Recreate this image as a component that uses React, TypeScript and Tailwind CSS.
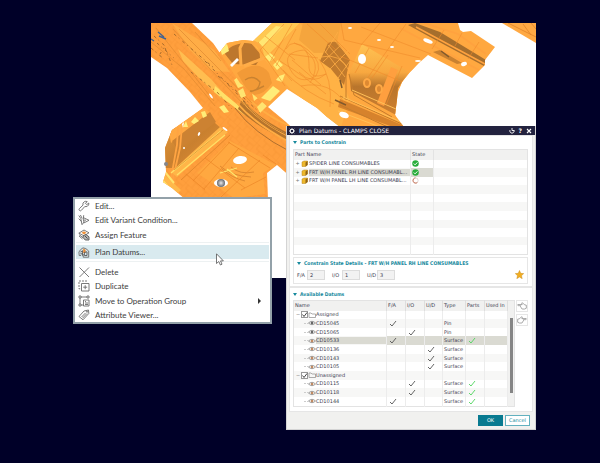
import type { ReactNode } from "react";

const FONT = "font-['Lato','Open_Sans',sans-serif]";

/* ---------- Viewport model ---------- */

function BodyModel() {
  const rail = "M151 23H192L213 43 222 56 240 83 268 107 286 122 300 136V185L277 165 267 173 268 200H186L172 188 163 182 166 172 165 148 172 130 203 108 190 92 167 68 151 57Z";
  const hub = "M213 58 220 52 227 43 243 40 253 41 272 23H458L460 30 463 32 471 31 495 47 485 60V65L472 78 428 55 419 63 410 72 402 82 398 92 395 115 404 127H340L327 117 317 108 287 89 268 107 250 112 228 90Z";
  return (
    <svg viewBox="151 23 385 255" preserveAspectRatio="xMinYMin slice" className="block h-full w-full" role="img" aria-label="Vehicle body panel model">
      <defs>
        <linearGradient id="floor" x1="0" y1="0" x2="1" y2="1">
          <stop offset="0" stopColor="#e59b3c" />
          <stop offset="0.5" stopColor="#c9802f" />
          <stop offset="1" stopColor="#e89438" />
        </linearGradient>
        <linearGradient id="arch" x1="0" y1="0" x2="0" y2="1">
          <stop offset="0" stopColor="#ffc252" />
          <stop offset="0.4" stopColor="#f8a840" />
          <stop offset="0.6" stopColor="#b8752c" />
          <stop offset="1" stopColor="#cf8030" />
        </linearGradient>
        <radialGradient id="ball">
          <stop offset="0" stopColor="#e8e8e8" />
          <stop offset="1" stopColor="#66686c" />
        </radialGradient>
        <pattern id="seams" width="13" height="11" patternUnits="userSpaceOnUse" patternTransform="rotate(42)">
          <path d="M0 0H13M0 0V11M4 0V5H13M8 5V11" fill="none" stroke="#e88528" strokeWidth="0.5" />
        </pattern>
        <clipPath id="hubClip"><path d={hub} /></clipPath>
        <clipPath id="railClip"><path d={rail} /></clipPath>
      </defs>

      <path d={hub} fill="#ffa840" />
      <g clipPath="url(#hubClip)">
        <path d="M272 23 252 42 265 58 300 23Z" fill="#ffc852" />
        <path d="M276 26 258 43 262 47 283 27Z" fill="#ffe773" />
        <path d="M300 23 265 60 290 89 340 130 350 100 332 60Z" fill="#ffb245" />
        <path d="M303 23 299 40 314 53 345 52 361 23Z" fill="#f5a53d" />
        <path d="M328 43Q345 37 350 60L344 85 331 69 320 61Z" fill="#c07a2d" />
        <path d="M341 23 337 42 350 60 355 105 396 118 398 90 418 63 425 54 363 23Z" fill="#ffa840" />
        <path d="M362 44 349 73 351 91 396 115 398 88 409 72Z" fill="url(#arch)" />
        <path d="M391 67 398 70 384 106 377 103Z" fill="#ff9f3f" />
        <path d="M415 23 440 32 486 60 484 66 430 37 408 25Z" fill="#a66e2c" />
        <path d="M424 23 458 34 486 54M416 27 485 64M400 28 479 70" stroke="#ffa23f" strokeWidth="1.6" fill="none" />
        <path d="M440 50 462 63 457 64 433 52Z" fill="#c98130" />
        <path d="M340 99 407 127H393L338 107Z" fill="#d6822c" />
        <path d="M340 96 404 125M340 105 390 128M349 74 354 95 392 117M346 69 346 100" stroke="#c47c2c" fill="none" strokeWidth="1" />
        <path d="M343 97 406 124M338 111 380 127M352 90 396 109" stroke="#ffc058" fill="none" strokeWidth="1" />
        <path d="M225 54Q228 44 250 42L262 56 256 65 233 64Z" fill="#bd772d" />
        <path d="M216 58Q224 42 243 41T262 58" stroke="#ffab42" strokeWidth="4" fill="none" />
        <path d="M241 66 240 48 244 40M244 66 264 58" stroke="#ffad48" strokeWidth="3" fill="none" />
        <path d="M237 73Q258 58 269 73L272 83Q264 96 250 95Z" fill="#f29a37" />
        <path d="M245 80Q253 74 260 82 259 91 250 91M247 93 258 89 264 86" fill="none" stroke="#c98230" strokeWidth="1.4" />
        <path d="M220 48 227 44 229 51 222 55ZM265 57 270 53 275 57 270 62ZM273 65 278 60 283 65 277 70ZM279 76 285 74 282 82 276 80ZM261 98 273 86 280 91 270 101Z" fill="#ffed78" />
        <g fill="none" stroke="#f08b2c" strokeWidth="0.6">
          <path d="M284 24 260 50 285 86M292 24 270 62M296 29 276 66M258 42 292 81M265 36 295 60M307 24 336 50M320 24 350 54M341 23 344 40 420 58M380 23 361 45M406 24 364 83M340 56 405 83M369 48 355 73M388 55 372 78M402 66 386 105M361 27 431 54M444 30 432 49M462 33 455 46M479 42 468 59" />
          <path d="M286 49Q292 37 308 50T316 76Q299 86 290 69T304 50Q323 62 310 83M294 43Q310 47 309 64T326 74Q312 86 299 72M280 61Q301 74 326 94M283 70Q304 93 334 104M319 59Q333 80 330 107M301 86Q331 80 346 105M292 60 321 85M289 54 318 58" />
          <path d="M324 50 345 77M328 45 347 67M335 41 350 58M343 43 323 62M349 50 328 71M350 61 336 81M338 32 325 53M321 57Q340 52 350 72" stroke="#ffad45" strokeWidth="0.8" />
        </g>
        <path d="M340 80 342 88M335 100 346 105M441 51 449 57" stroke="#80592c" strokeWidth="1.5" />
      </g>
      <g fill="#fff">
        <ellipse cx="362" cy="59" rx="4" ry="5" />
        <ellipse cx="428" cy="41" rx="5" ry="2" transform="rotate(22 428 41)" />
        <ellipse cx="379" cy="40" rx="2" ry="1" /><ellipse cx="392" cy="47" rx="2" ry="1" />
        <ellipse cx="350" cy="28" rx="2" ry="1" /><ellipse cx="464" cy="64" rx="3" ry="2" transform="rotate(-20 464 64)" />
        <ellipse cx="344" cy="115" rx="5" ry="3" transform="rotate(20 344 115)" />
        <ellipse cx="418" cy="61" rx="3" ry="1" /><path d="M230 65 237 58 239 60 232 67Z" />
      </g>
      <g fill="#dd8932" stroke="#ffa945" strokeWidth="2">
        <ellipse cx="367" cy="83" rx="3" ry="4" /><ellipse cx="379" cy="89" rx="3" ry="4" />
      </g>

      <path d={rail} fill="#ff9f3d" />
      <g clipPath="url(#railClip)">
        <path d={rail} fill="url(#seams)" opacity="0.5" />
        <path d="M172 23 204 43 214 50 230 72 212 71 190 50Z" fill="#ffad46" />
        <path d="M178 49 190 60 211 79 224 94 221 98 199 78 183 61Z" fill="#ffbd50" />
        <path d="M215 86 227 96 239 106 246 116 229 103 214 92Z" fill="#ffe068" />
        <path d="M165 132 206 115 223 130 176 168 165 168Z" fill="url(#floor)" />
        <path d="M169 132 203 108 210 112 171 143Z" fill="#ffa942" />
        <path d="M172 141 210 112 216 122 178 150Z" fill="#cc8232" />
        <path d="M183 127 186 121 188 127ZM191 122 195 117 199 121 194 124ZM201 112 205 111 207 116 203 118ZM219 107 224 105 229 112 224 113Z" fill="#ffed78" />
        <path d="M178 127 177 145 170 184M182 126 180 148 171 187" stroke="#ffa442" strokeWidth="1.8" fill="none" />
        <path d="M220 127 228 132 177 177 171 172Z" fill="#ffb548" />
        <path d="M221 131 171 173M225 135 177 175" stroke="#ffdf66" strokeWidth="1.3" />
        <path d="M223 130 174 170M230 135 181 180" stroke="#d98028" strokeWidth="0.7" />
        <path d="M163 173 181 190 174 197 162 184Z" fill="#ffb84a" />
        <path d="M165 172 174 183M163 181 171 190" stroke="#ffe26c" strokeWidth="2" />
        <path d="M230 141 276 165 263 173 265 194 234 198 197 173Z" fill="#ffa840" />
        <path d="M220 166Q231 176 251 177M222 169Q232 178 245 181M231 167Q240 175 254 172" stroke="#d4822d" strokeWidth="0.8" fill="none" />
        <path d="M227 169 237 177M220 173 237 168" stroke="#ffe36a" strokeWidth="1.3" />
        <path d="M242 99Q256 117 290 134V142Q257 127 238 109Z" fill="#b5742d" />
        <path d="M240 98Q257 121 292 138M237 103Q255 124 291 143M251 101Q268 117 290 126" stroke="#ffac43" strokeWidth="1.8" fill="none" />
        <path d="M235 108Q253 133 291 152M243 101Q257 121 291 137" stroke="#9b632b" strokeWidth="0.8" fill="none" />
        <path d="M173 29 211 70 244 105M179 29 216 66 252 103M195 32 221 61M156 28 214 101M151 42 184 69 215 106" stroke="#e08a30" strokeWidth="0.7" fill="none" />
        <g fill="none" stroke="#a56a2c" strokeWidth="1" strokeDasharray="3 3 1 4">
          <path d="M154 36 165 46 160 54M157 43 174 58M165 48 172 65M174 34 214 68M205 61 250 107M218 76 232 87 260 113" />
          <path d="M191 72 217 92 232 109M151 48 164 59" />
        </g>
        <path d="M158 32 164 37M159 36 166 39M151 39 154 41" stroke="#456390" strokeWidth="1.4" />
        <path d="M234 80 239 76 244 86 238 88ZM238 91 243 88 246 96 241 98ZM252 93 258 98 254 101ZM257 107 263 101 267 106 260 113Z" fill="#ffe470" />
        <path d="M193 181 230 142M204 189 239 148M221 197 260 160M186 174 205 190M205 158 245 188M228 142 270 168M263 155 276 164M241 190 266 177" stroke="#ed8728" strokeWidth="0.7" />
      </g>
      <g fill="#fff">
        <ellipse cx="240" cy="160" rx="7" ry="4" transform="rotate(-8 240 160)" />
        <ellipse cx="221" cy="183" rx="7" ry="4" /><ellipse cx="199" cy="134" rx="1" ry="2" transform="rotate(25 199 134)" />
        <ellipse cx="211" cy="96" rx="1" ry="3" transform="rotate(-35 211 96)" /><ellipse cx="225" cy="129" rx="3" ry="1" transform="rotate(35 225 129)" />
        <circle cx="184" cy="148" r="1" /><path d="M182 124 184 122 183 128Z" />
      </g>
      <circle cx="221" cy="183" r="4" fill="url(#ball)" />
      <circle cx="166" cy="164" r="2" fill="#85858a" />
      <path d="M502 23H536V43Z" fill="#ffa943" />
      <path d="M508 23 536 37M531 23 536 29M523 24 531 35" stroke="#e1842b" strokeWidth="0.8" />
    </svg>
  );
}

/* ---------- Context menu ---------- */

function MenuIcon({ children }: { children: ReactNode }) {
  return (
    <svg viewBox="0 0 12 12" className="h-3 w-3 shrink-0" fill="none" stroke="#6b6b6b" strokeWidth="0.9" aria-hidden="true">
      {children}
    </svg>
  );
}

const wrench = <path d="M1.4 8.6 5 5.1Q4.3 2.9 6.3 1.7 7.7 0.9 9.2 1.6L7.4 3.4 8.8 4.6 10.8 3Q11.2 5.2 9.3 6.3 8.1 6.9 6.8 6.5L3.4 10.3Q2.4 11.4 1.4 10.4 0.6 9.5 1.4 8.6Z" />;
const variant = <><path d="M0.8 1.5 2.8 4.5 4 10.8M2.4 1 4.2 4.5M0.7 4.6 3.4 7.5M4.3 10.5 6.2 7.7" /><path d="M5.7 1.2 5.3 5.3 6.2 8.8 11 6.3 5.3 3.6M5.5 6 8 6.2" /></>;
const feature = <><path d="M0.8 4.2 6 1 11 3.8 6 6.8ZM1 5.6 5 8.6M1 7 4.5 10" /><path d="M3.5 3.8 6 2.2 8.5 3.8 6 5.6Z" fill="#ee9138" stroke="none" /><path d="M5.5 6.5 8 5.5 11 7.8V11H7.2L5 8.5Z" fill="#b5b5b5" stroke="#555" /><path d="M7 7 9.5 9.5" stroke="#444" /></>;
const datums = <><path d="M3 9.5H1.2Q0 5.5 2.6 3.6 4.8 0.6 7.8 2.6L10.7 5V11.2H5.2V8" /><path d="M5.2 2.5 7.6 3.8V7H5.2Z" fill="#e78a36" stroke="none" /><path d="M6.4 6.4 9 5.8V9.5H6.4ZM2.4 6 4.6 5.2M2.4 7.8H5M4.4 4.4V9.8" stroke="#555" /></>;
const cross = <path d="M1.5 1.5 11 11M11 1.5 1.5 11" />;
const duplicate = <><path d="M3.5 3.5H11V11H3.5ZM7.2 5.2V9.2M5.2 7.2H9.2" /><path d="M9 1H1V8.8H2.6" strokeDasharray="2 1" /></>;
const move = <><path d="M1 1H3V3H1ZM9 1H11V3H9ZM1 9H3V11H1ZM3 2H9M2 3V9M3 10H5" /><path d="M5.5 5H11V11H5.5ZM7 8H10M7 9.5H10M7 6.5H8" /></>;
const tag = <><path d="M1 7.5 6 2 10.5 1 10.8 4.5 5 10.8Z" /><path d="M3.5 8 7.5 4M4.5 9.2 9 4.5" /><circle cx="9" cy="2.7" r="0.6" /></>;

function MenuItem({ icon, label, active, submenu }: { icon: ReactNode; label: string; active?: boolean; submenu?: boolean }) {
  return (
    <button type="button" role="menuitem" className={`flex w-full items-center gap-[5px] pr-2 pl-[2px] text-left ${active ? "bg-[#d9eaef]" : ""}`}>
      <MenuIcon>{icon}</MenuIcon>
      <span className="flex-1">{label}</span>
      {submenu && <span className="h-0 w-0 border-y-[3px] border-l-[3px] border-y-transparent border-l-[#333]" />}
    </button>
  );
}

function ContextMenu() {
  return (
    <div role="menu" className="absolute top-[197px] left-[73px] w-[199px] border-2 border-[#93a1a9] bg-white px-px text-[8px] leading-[12px] text-[#3c3c3c]">
      <div className="grid h-[43px] auto-rows-fr">
        <MenuItem icon={wrench} label="Edit..." />
        <MenuItem icon={variant} label="Edit Variant Condition..." />
        <MenuItem icon={feature} label="Assign Feature" />
      </div>
      <div className="border-y border-[#edf1f2] py-[2px]">
        <div className="grid h-[14px]">
          <MenuItem icon={datums} label="Plan Datums..." active />
        </div>
      </div>
      <div className="grid h-[60px] auto-rows-fr pt-[3px]">
        <MenuItem icon={cross} label="Delete" />
        <MenuItem icon={duplicate} label="Duplicate" />
        <MenuItem icon={move} label="Move to Operation Group" submenu />
        <MenuItem icon={tag} label="Attribute Viewer..." />
      </div>
      <svg viewBox="0 0 8 13" className="absolute top-[54px] left-[141px] h-[13px] w-2" aria-hidden="true">
        <path d="M0.5 0.8V10.5L2.8 8.5 4.4 12 6 11.2 4.5 7.9H7.4Z" fill="#fff" stroke="#555" strokeWidth="0.8" />
      </svg>
    </div>
  );
}

/* ---------- Dialog ---------- */

function SectionTitle({ children }: { children: ReactNode }) {
  return (
    <h2 className="flex items-center gap-[3px] font-['DejaVu_Sans_Condensed','Open_Sans',sans-serif] leading-[8px] font-bold text-[#188a9e]">
      <span className="h-0 w-0 border-x-2 border-t-[3px] border-x-transparent border-t-[#188a9e]" />
      {children}
    </h2>
  );
}

function Check({ color }: { color: string }) {
  return (
    <svg viewBox="0 0 8 7" className="mx-auto block h-[7px] w-2" aria-label="Yes">
      <path d="M1 4 3 6 7 1" fill="none" stroke={color} strokeWidth="0.9" />
    </svg>
  );
}

function StateIcon({ ok }: { ok: boolean }) {
  return (
    <svg viewBox="0 0 8 8" className="block h-[7px] w-[7px]" aria-label={ok ? "Constrained" : "Incomplete"}>
      {ok ? (
        <><circle cx="4" cy="4" r="3.7" fill="#29ad3b" /><path d="M2 4 3.5 5.5 6.2 2.7" fill="none" stroke="#fff" strokeWidth="1.1" /></>
      ) : (
        <><circle cx="4" cy="4" r="3" fill="none" stroke="#ddd0cc" strokeWidth="1" /><path d="M4 1A3 3 0 1 0 6 6.4" fill="none" stroke="#c7694a" strokeWidth="1" /></>
      )}
    </svg>
  );
}

const parts = [
  { name: "SPIDER LINE CONSUMABLES", ok: true },
  { name: "FRT W/H PANEL RH LINE CONSUMABL...", ok: true, selected: true },
  { name: "FRT W/H PANEL LH LINE CONSUMABL...", ok: false },
];
const emptyRows = [3, 4, 5, 6, 7, 8, 9, 10];

function PartsTable() {
  return (
    <table className="h-[106px] w-full table-fixed border-collapse border border-[#e3e3e3] text-left">
      <colgroup><col className="w-[117px]" /><col className="w-[23px]" /><col /></colgroup>
      <thead>
        <tr className="bg-[#f1f1f0]">
          <th className="h-[10px] border-r border-[#e3e3e3] pl-px font-normal">Part Name</th>
          <th className="border-r border-[#e3e3e3] pl-px font-normal">State</th>
          <th />
        </tr>
      </thead>
      <tbody>
        {parts.map((p) => (
          <tr key={p.name} className="even:bg-[#f7f7f6]">
            <td className="border-r border-[#ececec]">
              <div className="flex items-center whitespace-nowrap">
                <span className="w-[7px] shrink-0 text-center text-[#777]">+</span>
                <svg viewBox="0 0 7 7" className="mr-px h-[7px] w-[7px] shrink-0" aria-hidden="true">
                  <path d="M1 2 3 1H6.5V5L4.5 6.5H1Z" fill="#eeb82b" stroke="#b7821b" strokeWidth="0.5" />
                  <path d="M4.5 2.5 6.5 1V5L4.5 6.5Z" fill="#8d6218" />
                </svg>
                <span className={`flex-1 ${p.selected ? "bg-[#dadad2]" : ""}`}>{p.name}</span>
              </div>
            </td>
            <td className={`border-r border-[#ececec] pl-px ${p.selected ? "bg-[#dadad2]" : ""}`}><StateIcon ok={p.ok} /></td>
            <td />
          </tr>
        ))}
        {emptyRows.map((r) => (
          <tr key={r} className={r % 2 ? "bg-[#f7f7f6]" : ""}>
            <td className="border-r border-[#ececec]">&nbsp;</td>
            <td className="border-r border-[#ececec]">&nbsp;</td>
            <td>&nbsp;</td>
          </tr>
        ))}
      </tbody>
    </table>
  );
}

type Datum = { name: string; group?: boolean; fa?: boolean; io?: boolean; ud?: boolean; type?: string; parts?: boolean; selected?: boolean; warm?: boolean };
const datumRows: Datum[] = [
  { name: "Assigned", group: true },
  { name: "CD15045", fa: true, type: "Pin" },
  { name: "CD15065", io: true, type: "Pin" },
  { name: "CD10533", fa: true, type: "Surface", parts: true, selected: true, warm: true },
  { name: "CD10136", ud: true, type: "Surface", warm: true },
  { name: "CD10143", ud: true, type: "Surface", warm: true },
  { name: "CD10105", ud: true, type: "Surface", warm: true },
  { name: "Unassigned", group: true },
  { name: "CD10115", io: true, type: "Surface", parts: true, warm: true },
  { name: "CD10118", io: true, type: "Surface", parts: true, warm: true },
  { name: "CD10144", fa: true, type: "Surface", parts: true, warm: true },
];

function DatumName({ d }: { d: Datum }) {
  if (d.group) {
    return (
      <label className="flex items-center pl-[2px]">
        <span className="w-[5px] text-[#777]">−</span>
        <span className="grid h-[7px] w-[7px] shrink-0">
          <input type="checkbox" defaultChecked className="col-start-1 row-start-1 h-[7px] w-[7px] appearance-none border border-[#999] bg-white" />
          <svg viewBox="0 0 7 7" className="pointer-events-none col-start-1 row-start-1 h-[7px] w-[7px]" aria-hidden="true">
            <path d="M1.5 3.5 3 5.5 6 1.5" fill="none" stroke="#333" strokeWidth="0.9" />
          </svg>
        </span>
        <svg viewBox="0 0 8 6" className="h-[6px] w-2 shrink-0" aria-hidden="true">
          <path d="M1 5.5V1H3L4 2H7.5V5.5Z" fill="none" stroke="#8a8a8a" strokeWidth="0.7" />
        </svg>
        <span>{d.name}</span>
      </label>
    );
  }
  return (
    <div className="flex items-center pl-[10px]">
      <span className="w-1 border-t border-dotted border-[#ccc]" />
      <svg viewBox="0 0 8 6" className="h-[6px] w-2 shrink-0" aria-hidden="true">
        <path d="M0.5 3Q4-0.4 7.5 3 4 6.4 0.5 3Z" fill="none" stroke="#858585" strokeWidth="0.8" />
        <circle cx="4" cy="3" r="1.3" fill={d.warm ? "#c18a63" : "#666"} />
      </svg>
      <span className={`flex-1 ${d.selected ? "bg-[#dadad2]" : ""}`}>{d.name}</span>
    </div>
  );
}

function DatumsTable() {
  const cell = "border-r border-[#ececec]";
  const head = "border-r border-[#dedede] pl-px font-normal";
  return (
    <table className="h-[107px] w-full table-fixed border-collapse border border-[#e3e3e3] text-left whitespace-nowrap">
      <colgroup>
        <col className="w-[93px]" /><col className="w-[19px]" /><col className="w-[19px]" /><col className="w-[18px]" />
        <col className="w-[23px]" /><col className="w-[19px]" /><col className="w-[23px]" /><col />
      </colgroup>
      <thead>
        <tr className="bg-[#f1f1f0]">
          <th className={`h-[10px] ${head}`}>Name</th><th className={head}>F/A</th><th className={head}>I/O</th><th className={head}>U/D</th>
          <th className={head}>Type</th><th className={head}>Parts</th><th className={head}>Used In</th><th />
        </tr>
      </thead>
      <tbody>
        {datumRows.map((d, i) => (
          <tr key={d.name} className={i % 2 ? "bg-[#f7f7f6]" : ""}>
            <td className={cell}><DatumName d={d} /></td>
            {[d.fa, d.io, d.ud].map((on, c) => (
              <td key={c} className={`${cell} pr-[6px] ${d.selected ? "bg-[#dadad2]" : ""}`}>{on && <Check color="#555" />}</td>
            ))}
            <td className={`${cell} pl-px ${d.selected ? "bg-[#dadad2]" : ""}`}>{d.type}</td>
            <td className={`${cell} pr-[6px] ${d.selected ? "bg-[#dadad2]" : ""}`}>{d.parts && <Check color="#4ed45c" />}</td>
            <td className={`${cell} ${d.selected ? "bg-[#dadad2]" : ""}`} />
            {i === 0 && (
              <td rowSpan={11} className="bg-[#f1f1f0] align-top">
                <div className="mx-auto mt-[7px] h-[75px] w-[3px] bg-[#858585]" />
              </td>
            )}
          </tr>
        ))}
      </tbody>
    </table>
  );
}

function HandButton({ label, flip }: { label: string; flip?: boolean }) {
  return (
    <button type="button" aria-label={label} className="grid h-3 w-3 place-items-center border border-[#e6e6e6] bg-white">
      <svg viewBox="0 0 12 10" className={`h-2 w-[10px] ${flip ? "-scale-x-100" : ""}`} aria-hidden="true">
        <path d="M0.8 3.2Q0.4 4.6 1.6 4.6H4.4Q3.6 6 4.8 6.4 4.4 7.6 5.6 7.8 5.6 8.8 6.8 8.8H9.2L11.4 7.8V4L9 3.4 6.6 0.9Q5.4 0.8 5.8 2.2L6.2 3.2Z" fill="none" stroke="#777" strokeWidth="0.8" />
      </svg>
    </button>
  );
}

function CountField({ id, label, value }: { id: string; label: string; value: string }) {
  return (
    <div className="flex w-[35px] items-center justify-between pr-[7px]">
      <label htmlFor={id}>{label}</label>
      <input id={id} readOnly defaultValue={value} className="h-[10px] w-[18px] border border-[#dcdcdc] bg-[#f2f2f2] pl-[2px]" />
    </div>
  );
}

function PlanDatumsDialog() {
  return (
    <section role="dialog" aria-labelledby="dialog-title" className="absolute top-[126px] right-[64px] w-[250px] border-x border-b border-[#d4d4d4] bg-[#f1f1ef] font-['DejaVu_Sans','Open_Sans',sans-serif] text-[5px] leading-[7px] text-[#3c3c50]">
      <header className="flex h-[9px] items-center gap-[4px] bg-[#23233f] pr-[3px] pl-[2px] text-white">
        <svg viewBox="0 0 8 8" className="h-[6px] w-[6px]" aria-hidden="true">
          <circle cx="4" cy="4" r="2.4" fill="none" stroke="#fff" strokeWidth="1.4" />
          <path d="M4 0V1.5M4 6.5V8M0 4H1.5M6.5 4H8M1 1 2 2M6 6 7 7M7 1 6 2M2 6 1 7" stroke="#fff" />
        </svg>
        <h1 id="dialog-title" className="flex-1 text-[6px] leading-[9px] font-normal">Plan Datums - CLAMPS CLOSE</h1>
        <button type="button" aria-label="Reset"><svg viewBox="0 0 6 6" className="h-[6px] w-[6px]"><path d="M1 2A2.2 2.2 0 1 0 5 2M3 0V2.5H5" fill="none" stroke="#fff" strokeWidth="0.9" /></svg></button>
        <button type="button" aria-label="Help" className="text-[6px] font-bold">?</button>
        <button type="button" aria-label="Close"><svg viewBox="0 0 6 6" className="h-[6px] w-[6px]"><path d="M1 1 5 5M5 1 1 5" stroke="#fff" strokeWidth="1.1" /></svg></button>
      </header>
      <div className="mx-[2px] border border-[#e6e6e6] bg-white px-[3px] pt-[2px] pb-[2px]">
        <SectionTitle>Parts to Constrain</SectionTitle>
        <div className="mt-[3px] mr-px"><PartsTable /></div>
        <div className="mt-[2px] mr-px border border-[#e6e6e6] px-[3px] pt-px pb-[3px]">
          <SectionTitle>Constrain State Details - FRT W/H PANEL RH LINE CONSUMABLES</SectionTitle>
          <div className="mt-[3px] flex">
            <CountField id="fa" label="F/A" value="2" />
            <CountField id="io" label="I/O" value="1" />
            <CountField id="ud" label="U/D" value="3" />
            <svg viewBox="0 0 10 10" className="ml-auto h-[9px] w-[9px]" aria-hidden="true">
              <path d="M5 0.5 6.4 3.7 9.7 4 7.2 6.3 8 9.6 5 7.8 2 9.6 2.8 6.3 0.3 4 3.6 3.7Z" fill="#f3ae20" stroke="#c58a22" strokeWidth="0.5" />
            </svg>
          </div>
        </div>
      </div>
      <div className="mx-[2px] border border-[#e6e6e6] bg-white px-[3px] pt-[2px] pb-1">
        <SectionTitle>Available Datums</SectionTitle>
        <div className="mt-[2px] mr-px flex gap-px">
          <div className="flex-1"><DatumsTable /></div>
          <div className="flex flex-col gap-[2px]">
            <HandButton label="Assign datum" />
            <HandButton label="Unassign datum" flip />
          </div>
        </div>
      </div>
      <footer className="flex justify-end gap-[2px] px-[5px] pt-[3px] pb-[3px]">
        <button type="button" className="h-[11px] w-[25px] bg-[#087a90] text-white">OK</button>
        <button type="button" className="h-[11px] w-[25px] border border-[#62b1bf] bg-white text-[#188a9e]">Cancel</button>
      </footer>
    </section>
  );
}

export default function App() {
  return (
    <main className={`relative min-h-screen bg-[#000028] pt-[23px] pr-[64px] pl-[151px] ${FONT}`}>
      <div className="h-[255px] overflow-hidden bg-white"><BodyModel /></div>
      <ContextMenu />
      <PlanDatumsDialog />
    </main>
  );
}
